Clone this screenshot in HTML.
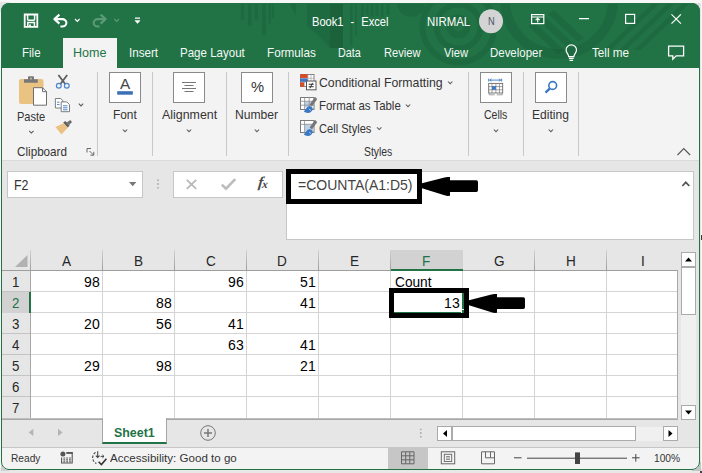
<!DOCTYPE html>
<html><head><meta charset="utf-8"><title>Book1 - Excel</title>
<style>
*{box-sizing:border-box;margin:0;padding:0}
html,body{width:702px;height:473px;overflow:hidden}
body{background:#f7f7f7;font-family:"Liberation Sans",sans-serif;font-size:13px;color:#262626;position:relative}
.a{position:absolute}
.t{position:absolute;white-space:nowrap;transform-origin:0 0;display:block}
#win{position:absolute;left:1px;top:3px;width:699px;height:467px;border-radius:8px;background:#f3f3f3;overflow:hidden}
#inner{position:absolute;left:-1px;top:-3px;width:702px;height:473px}
#frame{position:absolute;left:1px;top:3px;width:699px;height:467px;border-radius:8px;border:1px solid #217346;pointer-events:none}
.sep{position:absolute;top:72px;width:1px;height:84px;background:#c8c8c8}
.box{position:absolute;top:72px;width:32px;height:31px;background:#fff;border:1px solid #8a8a8a}
.gl{position:absolute;background:#d4d4d4}
svg{position:absolute;overflow:visible}
</style></head><body>
<div class="a" style="left:0;top:468px;width:702px;height:5px;background:#e8e8e8"></div>
<div class="a" style="left:700px;top:471px;width:2px;height:2px;background:#444"></div>
<div class="a" style="left:0;top:2px;width:10px;height:10px;background:#e4e4e4"></div>
<div class="a" style="left:692px;top:3px;width:8px;height:8px;background:#dedede"></div>
<div class="a" style="left:700px;top:3px;width:1px;height:466px;background:#e6e6e6"></div>
<div class="a" style="left:1px;top:462px;width:8px;height:9px;background:#d0d0d0"></div>
<div class="a" style="left:692px;top:462px;width:9px;height:9px;background:#c4c4c4"></div>
<div id="win"><div id="inner">
<!-- title bar -->
<div class="a" style="left:0;top:0;width:702px;height:68px;background:#217346"></div>
<svg style="left:0;top:0" width="702" height="68" viewBox="0 0 702 68">
<g fill="#000" fill-opacity="0.075">
<rect x="240.800" y="3" width="3.200" height="16.700"/><rect x="248" y="3" width="3.800" height="23"/><rect x="254.400" y="3" width="3.800" height="16.700"/><rect x="262" y="3" width="4" height="32"/><rect x="268.500" y="3" width="2.500" height="20.500"/><rect x="271.800" y="3" width="2.200" height="15.400"/>
<polygon points="289,3 296,3 296,16"/>
<polygon points="307,3 343,3 343,48 330,48 318.500,36 307,26"/>
<rect x="330" y="3" width="13" height="45"/>
<rect x="350" y="3" width="2.500" height="42"/><rect x="355" y="3" width="2" height="33"/><rect x="360.800" y="3" width="3.200" height="14"/><rect x="366" y="3" width="2.500" height="12"/><rect x="370.500" y="3" width="3" height="14"/><rect x="375.500" y="3" width="3" height="13"/><rect x="381" y="3" width="2.600" height="14"/><rect x="386.500" y="3" width="3" height="12"/>
<path d="M397 3a14 14 0 0 0 28 0z"/>
<polygon points="683,3 690,3 641,50 634,50"/><polygon points="668,3 675,3 626,50 619,50"/><polygon points="653,3 660,3 611,50 604,50"/>
<polygon points="538,20 544,16 574,44 568,48"/><polygon points="528,26 534,22 564,50 558,54"/><polygon points="548,14 554,10 584,38 578,42"/>
</g>
<g fill="none" stroke="#000" stroke-opacity="0.075">
<circle cx="458.500" cy="26.500" r="8.500" stroke-width="7"/><circle cx="458.500" cy="26.500" r="22" stroke-width="6"/><circle cx="458.500" cy="26.500" r="36" stroke-width="6"/>
<circle cx="559" cy="0" r="54" stroke-width="10"/>
</g>
</svg>
<!-- Home tab -->
<div class="a" style="left:63px;top:38px;width:54px;height:30px;background:#f3f3f3"></div>
<!-- QAT icons -->
<svg style="left:0;top:0" width="702" height="68" viewBox="0 0 702 68" fill="none" stroke="#fff" stroke-width="1.3">
<!-- save -->
<path d="M24.7 14.5h12.6v12.4h-12.6z" stroke-width="1.8"/><path d="M27.6 14.6v4.6a1 1 0 0 0 1 1h5a1 1 0 0 0 1-1v-4.6M27.8 27v-4.6h6.6v4.6" stroke-width="1.5"/><path d="M30 24.5v2.4" stroke-width="1.8"/>
<!-- undo -->
<path d="M59.4 14.6l-5 4.5 5 4.5M54.8 19.1h7.4a4.2 3.7 0 0 1 0 7.4h-1.800" stroke-width="2.100" stroke-linejoin="round"/>
<path d="M75 19l2.3 2.3 2.3-2.3" stroke-width="1.2"/>
<!-- redo dim -->
<g stroke="#5a9a77"><path d="M100.600 14.600l5 4.500-5 4.500M105.200 19.100h-7.400a4.200 3.700 0 0 0 0 7.400h1.800" stroke-width="2.100" stroke-linejoin="round"/>
<path d="M114.4 19l2.3 2.3 2.3-2.3" stroke-width="1.2"/></g>
<!-- customize -->
<path d="M135 18.2h5" stroke-width="1.3"/><path d="M135 20.6h5l-2.5 2.8z" fill="#fff" stroke-width="0.6"/>
<!-- avatar -->
<circle cx="491" cy="21.3" r="12" fill="#d4d4d4" stroke="none"/>
<!-- ribbon display -->
<rect x="531.6" y="14.6" width="12.2" height="9" stroke-width="1.2"/><path d="M531.6 17h12.2M537.7 22.6v-4.2M535.6 20.2l2.1-2 2.1 2" stroke-width="1.1"/>
<!-- minimize -->
<path d="M579 18.6h10" stroke-width="1.2"/>
<!-- maximize -->
<rect x="625.6" y="14.4" width="9" height="9" stroke-width="1.2"/>
<!-- close -->
<path d="M671.5 14.3l9.4 9.4M680.9 14.3l-9.4 9.4" stroke-width="1.2"/>
<!-- bulb -->
<path d="M568.700 56.600c0-2.600-2.600-3.400-2.600-6.600a5.200 5.200 0 0 1 10.400 0c0 3.200-2.600 4-2.600 6.600zM568.900 58.400h4.800M569.500 60.400h3.600" stroke-width="1.200"/>
<!-- comment -->
<path d="M668.600 46.200h15v9.600h-7.400l-3.400 3.400v-3.400h-4.200z" stroke-width="1.300"/>
</svg>

<!-- ribbon -->
<div class="a" style="left:2px;top:68px;width:697px;height:92px;background:#f3f3f3"></div>
<div class="a" style="left:2px;top:160px;width:697px;height:1px;background:#dadada"></div>
<div class="sep" style="left:97px"></div><div class="sep" style="left:152px"></div><div class="sep" style="left:226px"></div><div class="sep" style="left:288px"></div><div class="sep" style="left:468px"></div><div class="sep" style="left:523px"></div><div class="sep" style="left:578px"></div>
<div class="box" style="left:109px"></div><div class="box" style="left:173px"></div><div class="box" style="left:241px"></div><div class="box" style="left:480px"></div><div class="box" style="left:535px"></div>
<svg style="left:0;top:0" width="702" height="170" viewBox="0 0 702 170" fill="none">
<!-- paste -->
<rect x="19" y="79" width="24.500" height="25" rx="2" fill="#eac282"/>
<path d="M24 82.700v-3.400h4v-2.100a1 1 0 0 1 1-1h4a1 1 0 0 1 1 1v2.100h3.800v3.400z" fill="#787878"/><circle cx="31" cy="78.600" r="0.900" fill="#d9c9a8"/>
<path d="M33.500 87.700h9l4 4v13.500h-13z" fill="#fff" stroke="#6e6e6e" stroke-width="1"/><path d="M42.500 87.700v4h4" stroke="#6e6e6e" stroke-width="1" fill="none"/>
<!-- scissors -->
<path d="M58.400 75l7 9.200M67.200 75l-7 9.200" stroke="#5e5e5e" stroke-width="1.800"/>
<circle cx="58.800" cy="85.700" r="2.400" stroke="#4a86c8" stroke-width="1.200"/><circle cx="66.800" cy="85.700" r="2.400" stroke="#4a86c8" stroke-width="1.200"/>
<!-- copy -->
<path d="M55.400 98.500h5.300l2.200 2.200v7.300h-7.500z" fill="#fff" stroke="#707070" stroke-width="0.900"/>
<path d="M61.200 101.900h5.600l2.700 2.700v7.100h-8.300z" fill="#fff" stroke="#707070" stroke-width="0.900"/>
<path d="M57 102.200h2.500M57 104.600h2.500M63 105.800h4.500M63 107.800h4.500M63 109.800h4.500" stroke="#3b78c3" stroke-width="0.900"/>
<!-- painter -->
<path d="M55.400 127l8.200-3.800 4.200 4.600-6.400 6.800z" fill="#eac282"/>
<path d="M63.200 122.600l2.200-1.600 4.200 4.600-1.800 2z" fill="#5e5e5e"/><path d="M66.800 122.400l3.400-2.400 1.800 2-2.800 3z" fill="#6e6e6e"/>
<!-- font box A -->
<rect x="117.200" y="91.200" width="15.600" height="3.500" fill="#3b6fb6"/>
<!-- alignment lines -->
<path d="M182 82.500h14M184.500 85.500h9M182 88.500h14M184.500 91.500h9" stroke="#666" stroke-width="0.900"/>
<!-- cells icon -->
<g transform="translate(-0.300,3.600)">
<path d="M489 75v3M502 75v3M489.500 76.500h12" stroke="#3b78c3" stroke-width="0.900"/><path d="M491.800 75.200l-1.600 1.300 1.600 1.300M499.200 75.200l1.600 1.300-1.600 1.300" stroke="#3b78c3" stroke-width="0.800"/>
<rect x="489" y="79.800" width="14" height="9.600" fill="#fff" stroke="#6a6a6a" stroke-width="0.900"/><path d="M489 83h14M489 86.200h14M492.300 79.800v9.600M496.200 79.800v9.600M499.800 79.800v9.600" stroke="#7a7a7a" stroke-width="0.700"/>
<rect x="492.300" y="82.600" width="3.900" height="3.600" fill="#3b78c3"/>
<path d="M489.500 89.600v1.600h5.500M497 91.200h5.500v-1.600" stroke="#888" stroke-width="0.800"/>
</g>
<!-- editing magnifier -->
<circle cx="552.700" cy="85.500" r="3.900" stroke="#3b78c3" stroke-width="1.600" fill="#fff"/><path d="M549.900 88.400l-4.400 4.200" stroke="#3b78c3" stroke-width="2.300"/>
<!-- styles icons -->
<g id="cf">
<rect x="300.500" y="74.500" width="13.500" height="12" fill="#fff" stroke="#7a7a7a" stroke-width="0.900"/>
<path d="M300.500 78.300h13.500M300.500 82.200h13.500M304.300 74.500v12M307.900 74.500v12M311 74.500v12" stroke="#9a9a9a" stroke-width="0.600"/>
<rect x="300.100" y="74.100" width="7.600" height="3.900" fill="#d24e2a"/>
<rect x="300.100" y="78.500" width="7.600" height="3.300" fill="#3f74c4"/>
<rect x="300.100" y="82.300" width="4" height="4.500" fill="#d24e2a"/>
<rect x="306.500" y="81" width="9.500" height="8.800" fill="#fff" stroke="#555" stroke-width="1"/>
<path d="M308.700 84.300h5M308.700 86.700h5M312.600 82.800l-2.600 5.400" stroke="#222" stroke-width="0.900"/>
</g>
<g id="fat">
<rect x="300.500" y="97.500" width="13.500" height="12" fill="#fff" stroke="#7a7a7a" stroke-width="1"/>
<rect x="304.800" y="101.500" width="7.400" height="6" fill="#bdd2ea"/>
<path d="M300.500 101.300h13.500M300.500 105.200h13.500M304.600 97.500v12M309.200 97.500v12" stroke="#8a8a8a" stroke-width="0.800"/>
<path d="M316.400 98l-1.400 -1 -5.400 7.400 2.400 1.800 5 -6.800z" fill="#767676"/>
<path d="M310 106.2c-3.200 -0.600 -3.400 2.600 -6.200 5 2.200 2.600 8.200 2.600 9 -2.400 0.200 -1.200 -1.400 -2.400 -2.800 -2.600z" fill="#3b78c3"/>
<path d="M309 109.8c0.800 -0.600 1.800 -0.200 1.600 0.800" stroke="#cfe0f5" stroke-width="0.800" fill="none"/>
</g>
<g id="cs">
<rect x="300.500" y="120.500" width="13.500" height="12" fill="#fff" stroke="#7a7a7a" stroke-width="1"/>
<rect x="304.800" y="124.500" width="8.400" height="7" fill="#bdd2ea"/>
<path d="M300.500 124.300h13.500M304.600 120.500v12" stroke="#8a8a8a" stroke-width="0.800"/>
<path d="M316.400 121l-1.400 -1 -5.400 7.400 2.400 1.800 5 -6.800z" fill="#767676"/>
<path d="M310 129.2c-3.200 -0.600 -3.400 2.600 -6.200 5 2.200 2.600 8.200 2.600 9 -2.400 0.200 -1.200 -1.400 -2.400 -2.800 -2.600z" fill="#3b78c3"/>
<path d="M309 132.8c0.800 -0.600 1.800 -0.200 1.600 0.800" stroke="#cfe0f5" stroke-width="0.800" fill="none"/>
</g>
<!-- chevrons -->
<g stroke="#5a5a5a" stroke-width="1.050">
<path d="M29.2 130.9l2.2 2.2 2.2-2.2"/>
<path d="M78.8 103.7l2.2 2.2 2.2-2.2"/>
<path d="M122.8 129.5l2.2 2.2 2.2-2.2"/>
<path d="M186.8 129.5l2.2 2.2 2.2-2.2"/>
<path d="M254.7 129.5l2.2 2.2 2.2-2.2"/>
<path d="M493.8 129.5l2.2 2.2 2.2-2.2"/>
<path d="M548.7 129.5l2.2 2.2 2.2-2.2"/>
<path d="M448.0 81.5l2.2 2.2 2.2-2.2"/>
<path d="M405.8 104.5l2.2 2.2 2.2-2.2"/>
<path d="M377.0 127.3l2.2 2.2 2.2-2.2"/>
<path d="M677.500 155l6.300-6.300 6.300 6.300" stroke-width="1.200"/>
<!-- dialog launcher -->
<path d="M87 152.500v-4h4M89.500 151l4 4M93.800 151.800v3.400h-3.400" stroke-width="0.900"/>
</g>
</svg>

<!-- formula bar -->
<div class="a" style="left:2px;top:161px;width:697px;height:89px;background:#e6e6e6"></div>
<div class="a" style="left:7px;top:171px;width:136px;height:27px;background:#fff;border:1px solid #c6c6c6"></div>
<div class="a" style="left:173px;top:171px;width:110px;height:27px;background:#fff;border:1px solid #c6c6c6"></div>
<div class="a" style="left:286px;top:171px;width:408px;height:69px;background:#fff;border:1px solid #c6c6c6"></div>
<div class="a" style="left:286px;top:169px;width:136px;height:35px;border:5px solid #000;background:#fff"></div>
<svg style="left:0;top:0" width="702" height="260" viewBox="0 0 702 260" fill="none">
<path d="M129 182h7.400l-3.700 4.200z" fill="#777"/>
<circle cx="158" cy="180.200" r="0.900" fill="#aaa"/><circle cx="158" cy="184" r="0.900" fill="#aaa"/><circle cx="158" cy="187.800" r="0.900" fill="#aaa"/>
<path d="M186.800 179.800l9.400 9M196.200 179.800l-9.400 9" stroke="#b8b8b8" stroke-width="1.800"/>
<path d="M221.800 184.600l4.200 4 9.200-9.400" stroke="#bcbcbc" stroke-width="2.600"/>
<path d="M682.300 186l3.500-3.700 3.500 3.700" stroke="#555" stroke-width="1.700"/>
<!-- arrow 1 -->
<path d="M422.0 183.3L444.5 177.4L447.5 176.9L450.0 177.0L450.0 180.2L476.3 180.2Q478.0 180.2 478.0 181.9L478.0 190.3Q478.0 192.0 476.3 192.0L450.0 192.0L450.0 195.8L447.5 195.9L444.5 195.2L422.0 188.3z" fill="#000"/>
</svg>
<span class="t" style="left:258.500px;top:175.200px;font-family:'Liberation Serif',serif;font-style:italic;font-weight:700;font-size:15px;line-height:15px;color:#4a4a4a;transform:skewX(-6deg)">f<span style="font-size:11.500px;position:relative;top:1.200px;left:-0.800px">x</span></span>
<span class="t" style="left:119.800px;top:76px;font-size:15px;line-height:15px;color:#444;transform:scaleX(1.020)">A</span>
<span class="t" style="left:250.800px;top:79px;font-size:15px;line-height:15px;color:#333;transform:scaleX(0.980)">%</span>

<!-- grid -->
<div class="a" style="left:2px;top:250px;width:697px;height:169px;background:#e6e6e6"></div>
<div class="a" style="left:30px;top:271px;width:647px;height:148px;background:#fff"></div>
<!-- header highlights -->
<div class="gl" style="left:30px;top:271px;width:1px;height:148px;background:#a8a8a8"></div>
<div class="gl" style="left:30px;top:250px;width:1px;height:21px;background:linear-gradient(#d2d2d2,#9c9c9c)"></div>
<div class="gl" style="left:102px;top:271px;width:1px;height:148px;background:#d4d4d4"></div>
<div class="gl" style="left:102px;top:250px;width:1px;height:21px;background:linear-gradient(#d2d2d2,#9c9c9c)"></div>
<div class="gl" style="left:174px;top:271px;width:1px;height:148px;background:#d4d4d4"></div>
<div class="gl" style="left:174px;top:250px;width:1px;height:21px;background:linear-gradient(#d2d2d2,#9c9c9c)"></div>
<div class="gl" style="left:246px;top:271px;width:1px;height:148px;background:#d4d4d4"></div>
<div class="gl" style="left:246px;top:250px;width:1px;height:21px;background:linear-gradient(#d2d2d2,#9c9c9c)"></div>
<div class="gl" style="left:318px;top:271px;width:1px;height:148px;background:#d4d4d4"></div>
<div class="gl" style="left:318px;top:250px;width:1px;height:21px;background:linear-gradient(#d2d2d2,#9c9c9c)"></div>
<div class="gl" style="left:390px;top:271px;width:1px;height:148px;background:#d4d4d4"></div>
<div class="gl" style="left:390px;top:250px;width:1px;height:21px;background:linear-gradient(#d2d2d2,#9c9c9c)"></div>
<div class="gl" style="left:462px;top:271px;width:1px;height:148px;background:#d4d4d4"></div>
<div class="gl" style="left:462px;top:250px;width:1px;height:21px;background:linear-gradient(#d2d2d2,#9c9c9c)"></div>
<div class="gl" style="left:534px;top:271px;width:1px;height:148px;background:#d4d4d4"></div>
<div class="gl" style="left:534px;top:250px;width:1px;height:21px;background:linear-gradient(#d2d2d2,#9c9c9c)"></div>
<div class="gl" style="left:606px;top:271px;width:1px;height:148px;background:#d4d4d4"></div>
<div class="gl" style="left:606px;top:250px;width:1px;height:21px;background:linear-gradient(#d2d2d2,#9c9c9c)"></div>
<div class="gl" style="left:677px;top:271px;width:1px;height:148px;background:#a8a8a8"></div>
<div class="gl" style="left:2px;top:270px;width:676px;height:1px;background:#9e9e9e"></div>
<div class="gl" style="left:31px;top:291px;width:646px;height:1px"></div>
<div class="gl" style="left:2px;top:291px;width:28px;height:1px;background:#c4c4c4"></div>
<div class="gl" style="left:31px;top:312px;width:646px;height:1px"></div>
<div class="gl" style="left:2px;top:312px;width:28px;height:1px;background:#c4c4c4"></div>
<div class="gl" style="left:31px;top:333px;width:646px;height:1px"></div>
<div class="gl" style="left:2px;top:333px;width:28px;height:1px;background:#c4c4c4"></div>
<div class="gl" style="left:31px;top:354px;width:646px;height:1px"></div>
<div class="gl" style="left:2px;top:354px;width:28px;height:1px;background:#c4c4c4"></div>
<div class="gl" style="left:31px;top:375px;width:646px;height:1px"></div>
<div class="gl" style="left:2px;top:375px;width:28px;height:1px;background:#c4c4c4"></div>
<div class="gl" style="left:31px;top:396px;width:646px;height:1px"></div>
<div class="gl" style="left:2px;top:396px;width:28px;height:1px;background:#c4c4c4"></div>
<div class="a" style="left:391px;top:250px;width:72px;height:21px;background:#d2d2d2;border-bottom:2px solid #217346"></div>
<div class="a" style="left:2px;top:292px;width:29px;height:21px;background:#d2d2d2;border-right:2px solid #217346"></div>
<svg style="left:0;top:0" width="702" height="473" viewBox="0 0 702 473" fill="none">
<path d="M27.500 255v12h-12.500z" fill="#b2b2b2"/>
</svg>
<!-- selection green -->
<div class="a" style="left:390px;top:290px;width:74px;height:22.600px;border:2px solid #217346;border-bottom-width:1.400px"></div>
<div class="a" style="left:460.500px;top:309px;width:4px;height:4px;background:#217346;border-left:1px solid #fff;border-top:1px solid #fff"></div>
<div class="a" style="left:389px;top:288px;width:80px;height:30px;border:5px solid #000;border-bottom-width:5.400px"></div>
<svg style="left:0;top:0" width="702" height="473" viewBox="0 0 702 473" fill="none">
<path d="M469.0 300.3L491.5 294.4L494.5 293.9L497.0 294.0L497.0 297.2L523.3 297.2Q525.0 297.2 525.0 298.9L525.0 307.3Q525.0 309.0 523.3 309.0L497.0 309.0L497.0 312.8L494.5 312.9L491.5 312.2L469.0 305.3z" fill="#000"/>
</svg>
<!-- v scrollbar -->
<div class="a" style="left:681px;top:267px;width:15px;height:139px;background:#f0f0f0"></div>
<div class="a" style="left:681px;top:252px;width:15px;height:15px;background:#fff;border:1px solid #ababab"></div>
<div class="a" style="left:681px;top:267px;width:15px;height:48px;background:#fff;border:1px solid #ababab"></div>
<div class="a" style="left:681px;top:405px;width:15px;height:15px;background:#fff;border:1px solid #ababab;z-index:2"></div>
<svg style="left:0;top:0;z-index:3" width="702" height="473" viewBox="0 0 702 473">
<path d="M685 261.500h7l-3.500-4z" fill="#000"/><path d="M685 410.500h7l-3.500 4z" fill="#000"/>
</svg>

<!-- sheet tab bar -->
<div class="a" style="left:2px;top:419px;width:697px;height:28px;background:#e6e6e6"></div>
<div class="a" style="left:2px;top:418px;width:676px;height:1px;background:#bdbdbd"></div><div class="a" style="left:2px;top:419px;width:676px;height:1px;background:#a8a8a8"></div>
<div class="a" style="left:102px;top:418px;width:65px;height:26px;background:#fff;border-left:1px solid #a6a6a6;border-right:1px solid #a6a6a6;border-bottom:2px solid #217346"></div>
<div class="a" style="left:636px;top:427px;width:27px;height:14px;background:#f0f0f0"></div>
<div class="a" style="left:437px;top:426px;width:15px;height:15px;background:#fff;border:1px solid #ababab"></div>
<div class="a" style="left:452px;top:426px;width:184px;height:15px;background:#fff;border:1px solid #ababab"></div>
<div class="a" style="left:663px;top:426px;width:15px;height:15px;background:#fff;border:1px solid #ababab"></div>
<svg style="left:0;top:0" width="702" height="473" viewBox="0 0 702 473" fill="none">
<path d="M33.300 428.800v7.200l-4.600-3.600z" fill="#b4b4b4"/><path d="M58 428.800v7.200l4.600-3.600z" fill="#b4b4b4"/>
<circle cx="208" cy="433" r="7.300" stroke="#777" stroke-width="1"/><path d="M204 433h8M208 429v8" stroke="#777" stroke-width="1.500"/>
<circle cx="420.800" cy="429.300" r="0.900" fill="#aaa"/><circle cx="420.800" cy="433" r="0.900" fill="#aaa"/><circle cx="420.800" cy="436.700" r="0.900" fill="#aaa"/>
<path d="M447 430v7l-4-3.500z" fill="#000"/><path d="M668.500 430v7l4-3.500z" fill="#000"/>
</svg>

<!-- status bar -->
<div class="a" style="left:2px;top:447px;width:697px;height:23px;background:#f3f3f3;border-top:1px solid #c6c6c6"></div>
<div class="a" style="left:388px;top:448px;width:40px;height:22px;background:#c6c6c6"></div>
<svg style="left:0;top:0" width="702" height="473" viewBox="0 0 702 473" fill="none" stroke="#666" stroke-width="1">
<!-- macro -->
<circle cx="62.900" cy="454" r="2.500" fill="#555" stroke="none"/><path d="M66.400 453h5.800v10h-10.600v-5.400" stroke="#555" stroke-width="1.100"/><path d="M66.400 452.900h6.400" stroke="#555" stroke-width="1.800"/>
<path d="M63.400 458h1.800M66.200 458h1.800M69 458h1.800M63.400 459.900h1.800M66.200 459.900h1.800M69 459.900h1.800M63.400 461.700h1.800M66.200 461.700h1.800M69 461.700h1.800" stroke="#555" stroke-width="1.100"/>
<!-- accessibility -->
<path d="M95.600 452.400a6.200 6.200 0 0 0 0.800 11" stroke-dasharray="2.600 1.400" stroke="#444" stroke-width="1.100"/>
<path d="M97.700 451.300v6.200M95.800 455.600l1.900 1.900 1.900-1.900" stroke="#444" stroke-width="1.100"/>
<path d="M100.600 456.400h3.400M102.400 454.900l1.600 1.500-1.600 1.500" stroke="#444" stroke-width="1"/>
<path d="M98.600 461.800l2.800 2.800 5-5.800" stroke="#333" stroke-width="1.600"/>
<!-- normal view -->
<path d="M401.500 451.800h12.500v12h-12.500zM401.500 455.800h12.500M401.500 459.800h12.500M405.700 451.800v12M409.800 451.800v12" stroke="#666"/>
<!-- page layout -->
<rect x="441.300" y="451.800" width="13.400" height="12" /><rect x="444.300" y="454.300" width="7.400" height="7.200" stroke-width="0.900"/><path d="M446 456.500h4M446 458h4M446 459.500h4" stroke-width="0.700"/>
<!-- page break -->
<path d="M481.500 451.800h13v12h-13zM485.500 451.800v6h5v-6M490.500 457.800h4" />
<!-- zoom -->
<path d="M514 457.800h7.500M527 458.200h100M632 457.800h7.600M635.800 454v7.600" stroke="#444"/>
<rect x="575" y="452.400" width="5" height="11.600" fill="#444" stroke="none"/>
</svg>
<span class="t" style="left:21.81px;top:46.30px;font-size:13px;line-height:13px;color:#f4f8f5;transform:scaleX(0.8875);">File</span>
<span class="t" style="left:128.81px;top:46.30px;font-size:13px;line-height:13px;color:#f4f8f5;transform:scaleX(0.8934);">Insert</span>
<span class="t" style="left:179.81px;top:46.30px;font-size:13px;line-height:13px;color:#f4f8f5;transform:scaleX(0.8868);">Page Layout</span>
<span class="t" style="left:267.00px;top:46.30px;font-size:13px;line-height:13px;color:#f4f8f5;transform:scaleX(0.8998);">Formulas</span>
<span class="t" style="left:338.27px;top:46.30px;font-size:13px;line-height:13px;color:#f4f8f5;transform:scaleX(0.8300);">Data</span>
<span class="t" style="left:383.84px;top:46.30px;font-size:13px;line-height:13px;color:#f4f8f5;transform:scaleX(0.8571);">Review</span>
<span class="t" style="left:443.70px;top:46.30px;font-size:13px;line-height:13px;color:#f4f8f5;transform:scaleX(0.8580);">View</span>
<span class="t" style="left:490.42px;top:46.30px;font-size:13px;line-height:13px;color:#f4f8f5;transform:scaleX(0.8808);">Developer</span>
<span class="t" style="left:592.40px;top:46.30px;font-size:13px;line-height:13px;color:#f4f8f5;transform:scaleX(0.8987);">Tell me</span>
<span class="t" style="left:72.93px;top:46.30px;font-size:13px;line-height:13px;color:#217346;transform:scaleX(0.9657);">Home</span>
<span class="t" style="left:312.24px;top:15.00px;font-size:13px;line-height:13px;color:#fff;transform:scaleX(0.8552);word-spacing:4.6px;">Book1 - Excel</span>
<span class="t" style="left:426.52px;top:15.00px;font-size:13px;line-height:13px;color:#fff;transform:scaleX(0.8791);">NIRMAL</span>
<span class="t" style="left:488.00px;top:16.19px;font-size:11px;line-height:11px;color:#4a5568;transform:scaleX(0.8375);">N</span>
<span class="t" style="left:17.35px;top:109.90px;font-size:13px;line-height:13px;color:#343434;transform:scaleX(0.8497);">Paste</span>
<span class="t" style="left:17.00px;top:144.60px;font-size:13px;line-height:13px;color:#343434;transform:scaleX(0.8987);">Clipboard</span>
<span class="t" style="left:113.09px;top:108.10px;font-size:13px;line-height:13px;color:#343434;transform:scaleX(0.9134);">Font</span>
<span class="t" style="left:161.70px;top:108.10px;font-size:13px;line-height:13px;color:#343434;transform:scaleX(0.9537);">Alignment</span>
<span class="t" style="left:235.47px;top:108.10px;font-size:13px;line-height:13px;color:#343434;transform:scaleX(0.9323);">Number</span>
<span class="t" style="left:484.10px;top:108.10px;font-size:13px;line-height:13px;color:#343434;transform:scaleX(0.8063);">Cells</span>
<span class="t" style="left:532.17px;top:108.10px;font-size:13px;line-height:13px;color:#343434;transform:scaleX(0.9268);">Editing</span>
<span class="t" style="left:319.20px;top:76.20px;font-size:13px;line-height:13px;color:#343434;transform:scaleX(0.9452);">Conditional Formatting</span>
<span class="t" style="left:319.42px;top:99.10px;font-size:13px;line-height:13px;color:#343434;transform:scaleX(0.8796);">Format as Table</span>
<span class="t" style="left:319.40px;top:121.80px;font-size:13px;line-height:13px;color:#343434;transform:scaleX(0.8529);">Cell Styles</span>
<span class="t" style="left:364.40px;top:145.00px;font-size:13px;line-height:13px;color:#343434;transform:scaleX(0.7966);">Styles</span>
<span class="t" style="left:14.31px;top:178.35px;font-size:14px;line-height:14px;color:#333;transform:scaleX(0.8874);">F2</span>
<span class="t" style="left:297.90px;top:177.65px;font-size:14px;line-height:14px;color:#444;transform:scaleX(0.9998);">=COUNTA(A1:D5)</span>
<span class="t" style="left:11.20px;top:453.27px;font-size:11.5px;line-height:11.5px;color:#333;transform:scaleX(0.8838);">Ready</span>
<span class="t" style="left:110.00px;top:453.27px;font-size:11.5px;line-height:11.5px;color:#333;transform:scaleX(1.0070);">Accessibility: Good to go</span>
<span class="t" style="left:654.10px;top:453.27px;font-size:11.5px;line-height:11.5px;color:#333;transform:scaleX(0.8874);">100%</span>
<span class="t" style="left:113.90px;top:426.00px;font-size:13px;line-height:13px;color:#217346;transform:scaleX(0.9552);font-weight:700;">Sheet1</span>
<span class="t" style="left:61.65px;top:253.85px;font-size:14px;line-height:14px;color:#262626;transform:scaleX(0.9700);">A</span>
<span class="t" style="left:133.65px;top:253.85px;font-size:14px;line-height:14px;color:#262626;transform:scaleX(0.9700);">B</span>
<span class="t" style="left:205.65px;top:253.85px;font-size:14px;line-height:14px;color:#262626;transform:scaleX(0.9700);">C</span>
<span class="t" style="left:277.16px;top:253.85px;font-size:14px;line-height:14px;color:#262626;transform:scaleX(0.9700);">D</span>
<span class="t" style="left:349.65px;top:253.85px;font-size:14px;line-height:14px;color:#262626;transform:scaleX(0.9700);">E</span>
<span class="t" style="left:422.13px;top:253.85px;font-size:14px;line-height:14px;color:#217346;transform:scaleX(0.9700);">F</span>
<span class="t" style="left:493.65px;top:253.85px;font-size:14px;line-height:14px;color:#262626;transform:scaleX(0.9700);">G</span>
<span class="t" style="left:565.65px;top:253.85px;font-size:14px;line-height:14px;color:#262626;transform:scaleX(0.9700);">H</span>
<span class="t" style="left:640.56px;top:253.85px;font-size:14px;line-height:14px;color:#262626;transform:scaleX(0.9700);">I</span>
<span class="t" style="left:11.53px;top:275.05px;font-size:14px;line-height:14px;color:#262626;transform:scaleX(0.9500);">1</span>
<span class="t" style="left:12.00px;top:296.05px;font-size:14px;line-height:14px;color:#217346;transform:scaleX(0.9500);">2</span>
<span class="t" style="left:12.00px;top:317.05px;font-size:14px;line-height:14px;color:#262626;transform:scaleX(0.9500);">3</span>
<span class="t" style="left:12.00px;top:338.05px;font-size:14px;line-height:14px;color:#262626;transform:scaleX(0.9500);">4</span>
<span class="t" style="left:12.00px;top:359.05px;font-size:14px;line-height:14px;color:#262626;transform:scaleX(0.9500);">5</span>
<span class="t" style="left:12.00px;top:380.05px;font-size:14px;line-height:14px;color:#262626;transform:scaleX(0.9500);">6</span>
<span class="t" style="left:12.00px;top:401.05px;font-size:14px;line-height:14px;color:#262626;transform:scaleX(0.9500);">7</span>
<span class="t" style="left:84.11px;top:275.05px;font-size:14px;line-height:14px;color:#000;transform:scaleX(1.0000);">98</span>
<span class="t" style="left:228.11px;top:275.05px;font-size:14px;line-height:14px;color:#000;transform:scaleX(1.0000);">96</span>
<span class="t" style="left:300.11px;top:275.05px;font-size:14px;line-height:14px;color:#000;transform:scaleX(1.0000);">51</span>
<span class="t" style="left:156.11px;top:296.05px;font-size:14px;line-height:14px;color:#000;transform:scaleX(1.0000);">88</span>
<span class="t" style="left:300.11px;top:296.05px;font-size:14px;line-height:14px;color:#000;transform:scaleX(1.0000);">41</span>
<span class="t" style="left:84.11px;top:317.05px;font-size:14px;line-height:14px;color:#000;transform:scaleX(1.0000);">20</span>
<span class="t" style="left:156.11px;top:317.05px;font-size:14px;line-height:14px;color:#000;transform:scaleX(1.0000);">56</span>
<span class="t" style="left:228.11px;top:317.05px;font-size:14px;line-height:14px;color:#000;transform:scaleX(1.0000);">41</span>
<span class="t" style="left:228.11px;top:338.05px;font-size:14px;line-height:14px;color:#000;transform:scaleX(1.0000);">63</span>
<span class="t" style="left:300.11px;top:338.05px;font-size:14px;line-height:14px;color:#000;transform:scaleX(1.0000);">41</span>
<span class="t" style="left:84.11px;top:359.05px;font-size:14px;line-height:14px;color:#000;transform:scaleX(1.0000);">29</span>
<span class="t" style="left:156.11px;top:359.05px;font-size:14px;line-height:14px;color:#000;transform:scaleX(1.0000);">98</span>
<span class="t" style="left:300.11px;top:359.05px;font-size:14px;line-height:14px;color:#000;transform:scaleX(1.0000);">21</span>
<span class="t" style="left:444.11px;top:296.05px;font-size:14px;line-height:14px;color:#000;transform:scaleX(1.0000);">13</span>
<span class="t" style="left:394.50px;top:275.05px;font-size:14px;line-height:14px;color:#000;transform:scaleX(0.9768);">Count</span>
</div></div>
<div id="frame"></div>
<div class="a" style="left:700.500px;top:234.500px;width:1.500px;height:5.500px;background:#3a3a3a"></div>
</body></html>
